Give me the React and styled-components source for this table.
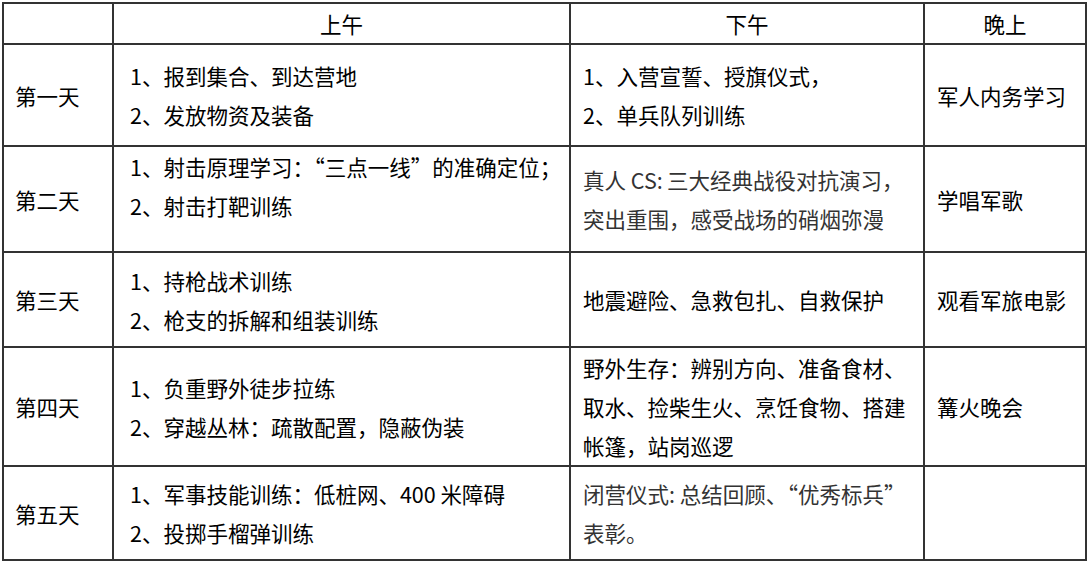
import React from 'react';
import styled, { createGlobalStyle } from 'styled-components';

const GlobalStyle = createGlobalStyle`
    html, body {
        margin: 0;
        padding: 0;
        background: #fff;
    }

    body {
        font-family: "Noto Sans CJK SC", "Noto Sans", sans-serif;
        color: #000;
    }
`;

const columns = [110, 457, 354, 162];
const rowHeights = [102, 106, 95, 118, 94];

const days = [
    {
        name: '第一天',
        morning: ['1、报到集合、到达营地', '2、发放物资及装备'],
        afternoon: ['1、入营宣誓、授旗仪式，', '2、单兵队列训练'],
        evening: ['军人内务学习'],
    },
    {
        name: '第二天',
        morning: ['1、射击原理学习：“三点一线”的准确定位；', '2、射击打靶训练'],
        morningTop: true,
        afternoon: ['真人 CS:\u2009三大经典战役对抗演习，', '突出重围，感受战场的硝烟弥漫'],
        afternoonMuted: true,
        evening: ['学唱军歌'],
    },
    {
        name: '第三天',
        morning: ['1、持枪战术训练', '2、枪支的拆解和组装训练'],
        afternoon: ['地震避险、急救包扎、自救保护'],
        evening: ['观看军旅电影'],
    },
    {
        name: '第四天',
        morning: ['1、负重野外徒步拉练', '2、穿越丛林：疏散配置，隐蔽伪装'],
        afternoon: ['野外生存：辨别方向、准备食材、', '取水、捡柴生火、烹饪食物、搭建', '帐篷，站岗巡逻'],
        evening: ['篝火晚会'],
    },
    {
        name: '第五天',
        morning: ['1、军事技能训练：低桩网、400 米障碍', '2、投掷手榴弹训练'],
        afternoon: ['闭营仪式: 总结回顾、“优秀标兵”', '表彰。'],
        afternoonMuted: true,
        evening: [],
    },
];

const Lines = ({ items }) => items.map((text, i) => <Line key={i}>{text}</Line>);

const App = () => (
    <>
        <GlobalStyle />
        <Page>
            <Schedule>
                <colgroup>
                    { columns.map((w, i) => <Col key={i} $w={w} />) }
                </colgroup>
                <thead>
                    <Row $h={40}>
                        <HeadCell />
                        <HeadCell>上午</HeadCell>
                        <HeadCell>下午</HeadCell>
                        <HeadCell>晚上</HeadCell>
                    </Row>
                </thead>
                <tbody>
                    { days.map((day, i) => (
                        <Row key={day.name} $h={rowHeights[i]}>
                            <DayCell>{ day.name }</DayCell>
                            <Cell $pad={16} $top={day.morningTop}>
                                <Lines items={day.morning} />
                            </Cell>
                            <Cell $pad={12} $muted={day.afternoonMuted}>
                                <Lines items={day.afternoon} />
                            </Cell>
                            <Cell $pad={12}>
                                <Lines items={day.evening} />
                            </Cell>
                        </Row>
                    )) }
                </tbody>
            </Schedule>
        </Page>
    </>
);

const Page = styled.div`
    padding: 2px 0 0 2px;
`;

const Schedule = styled.table`
    border-collapse: collapse;
    table-layout: fixed;
    width: 1083px;
    font-size: 21.5px;
    line-height: 39px;
`;

const Col = styled.col`
    width: ${props => props.$w}px;
`;

const Row = styled.tr`
    height: ${props => props.$h}px;
`;

const HeadCell = styled.th`
    border: 2px solid #333;
    font-weight: 400;
    text-align: center;
    padding: 0;
    color: #000;
`;

const DayCell = styled.td`
    border: 2px solid #333;
    padding: 0 0 0 11px;
    vertical-align: middle;
    white-space: nowrap;
`;

const Cell = styled.td`
    border: 2px solid #333;
    padding: 0 0 0 ${props => props.$pad}px;
    vertical-align: ${props => props.$top ? 'top' : 'middle'};
    color: ${props => props.$muted ? '#333' : '#000'};
`;

const Line = styled.div`
    white-space: nowrap;
`;

export default App;
